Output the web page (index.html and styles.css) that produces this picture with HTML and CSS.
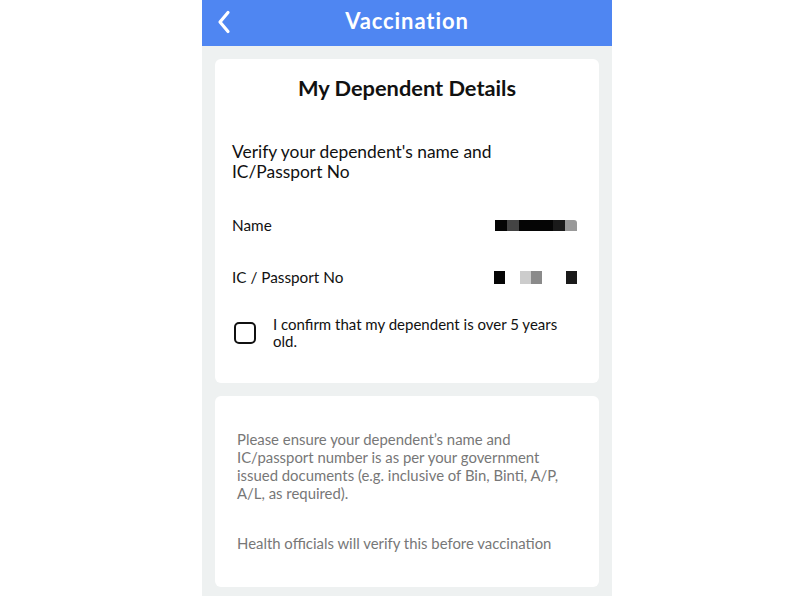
FILE: index.html
```html
<!DOCTYPE html>
<html lang="en">
<head>
    <meta charset="UTF-8">
    <meta name="viewport" content="width=device-width, initial-scale=1.0">
    <title>Vaccination</title>
    <link rel="stylesheet" href="styles.css">
</head>
<body>

<div class="phone">
    <header class="topbar">
        <a href="#" class="back">
            <svg width="16" height="24" viewBox="0 0 16 24">
                <path d="M12 2.5 L4 12 L12 21.5" fill="none" stroke="#fff" stroke-width="3.2" stroke-linecap="round" stroke-linejoin="round"/>
            </svg>
        </a>
        <div class="title">Vaccination</div>
    </header>

    <main class="content">
        <section class="card details">
            <h2>My Dependent Details</h2>
            <p class="intro">Verify your dependent's name and<br>IC/Passport No</p>

            <div class="row row-name">
                <span>Name</span>
                <span class="redact">
                    <i class="b k"></i><i class="b d"></i><i class="b k w"></i><i class="b k2"></i><i class="b g"></i>
                </span>
            </div>
            <div class="row row-ic">
                <span>IC / Passport No</span>
                <span class="redact ic">
                    <i class="sq k"></i><i class="gap1"></i><i class="sq l"></i><i class="sq m"></i><i class="gap2"></i><i class="sq k2"></i>
                </span>
            </div>

            <label class="confirm">
                <span class="box"></span>
                <span>I confirm that my dependent is over 5 years old.</span>
            </label>
        </section>

        <section class="card note">
            <p>Please ensure your dependent’s name and IC/passport number is as per your government issued documents (e.g. inclusive of Bin, Binti, A/P, A/L, as required).</p>
            <p>Health officials will verify this before vaccination</p>
        </section>
    </main>
</div>

</body>
</html>
```

FILE: styles.css
```css
body {
    margin: 0;
    padding: 0;
    background-color: #fff;
    font-family: Lato, "Open Sans", sans-serif;
    color: #111;
}
.phone {
    width: 410px;
    margin-left: 202px;
    height: 596px;
    background-color: #eef1f1;
    overflow: hidden;
}
.topbar {
    height: 46px;
    box-sizing: border-box;
    padding-bottom: 5px;
    background-color: #4f86f2;
    position: relative;
    display: flex;
    align-items: center;
    justify-content: center;
}
.back {
    position: absolute;
    left: 14px;
    top: 10px;
    display: block;
}
.title {
    color: #fff;
    font-weight: 700;
    font-size: 22px;
    letter-spacing: 0.9px;
}
.content {
    padding: 13px 13px 0;
    display: flex;
    flex-direction: column;
    gap: 13px;
}
.card {
    background-color: #fff;
    border-radius: 6px;
    box-sizing: border-box;
}
.details {
    height: 324px;
    padding: 17px 17px 0;
}
.details h2 {
    margin: 0;
    text-align: center;
    font-size: 21.8px;
    font-weight: 700;
    line-height: 24px;
}
.intro {
    margin: 42px 0 0;
    font-size: 17.4px;
    line-height: 20px;
}
.row {
    display: flex;
    justify-content: space-between;
    align-items: center;
    font-size: 15.3px;
    line-height: 20px;
}
.row-name {
    margin-top: 33px;
}
.row-ic {
    margin-top: 32px;
}
.redact {
    display: flex;
    margin-right: 5px;
}
.redact i {
    display: block;
    height: 11px;
}
.b { width: 12px; }
.b.w { width: 34px; }
.k { background: #050505; }
.d { background: #444; }
.k2 { background: #1a1a1a; }
.g { background: #999; border-radius: 0 3px 0 0; }
.l { background: #ccc; }
.m { background: #8a8a8a; }
.redact.ic i { height: 13px; }
.sq { width: 11px; }
.gap1 { width: 15px; }
.gap2 { width: 24px; }
.confirm {
    margin-top: 29px;
    display: flex;
    align-items: center;
    gap: 17px;
    font-size: 15px;
    line-height: 17px;
    padding-left: 2px;
    padding-right: 20px;
}
.box {
    flex: none;
    width: 18px;
    height: 18px;
    border: 2px solid #111;
    border-radius: 5px;
}
.note {
    height: 191px;
    padding: 34px 30px 0 22px;
    color: #777;
    font-size: 14.9px;
    line-height: 18px;
}
.note p {
    margin: 0 0 32px;
}
```
